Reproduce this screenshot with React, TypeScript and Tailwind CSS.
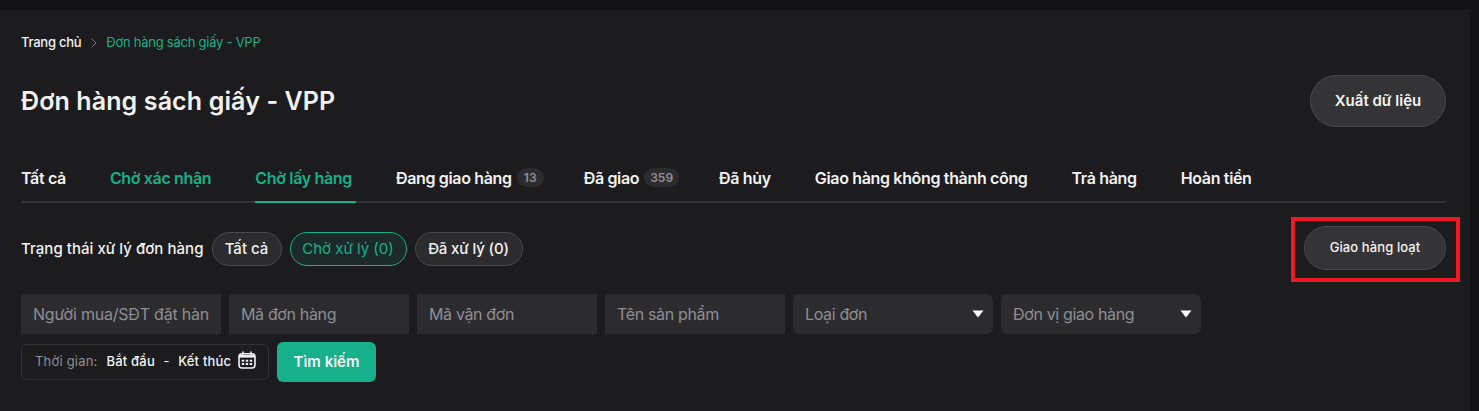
import React from 'react';
import { ChevronRight } from 'lucide-react';

const tabs = [
  { label: 'Tất cả' },
  { label: 'Chờ xác nhận', green: true },
  { label: 'Chờ lấy hàng', green: true, active: true },
  { label: 'Đang giao hàng', count: 13 },
  { label: 'Đã giao', count: 359 },
  { label: 'Đã hủy' },
  { label: 'Giao hàng không thành công' },
  { label: 'Trả hàng' },
  { label: 'Hoàn tiền' },
];

const CalendarIcon = () => (
  <svg width="18" height="18" viewBox="0 0 18 18" fill="none" stroke="currentColor" strokeWidth="1.6">
    <rect x="1" y="2.8" width="16" height="14.2" rx="3" />
    <path d="M5 0.6v3.6M13 0.6v3.6" />
    <path d="M1 4h16v2.6H1z" fill="currentColor" stroke="none" />
    <path d="M3.8 9.8h2.4M7.8 9.8h2.4M11.8 9.8h2.4M3.8 13h2.4M7.8 13h2.4M11.8 13h2.4" strokeWidth="2" />
  </svg>
);

const Caret = () => (
  <svg width="12" height="8" viewBox="0 0 12 8" fill="#fff">
    <path d="M0.5 0.5h11L6 7.5z" />
  </svg>
);

const TextField = ({ text, className }: { text: string; className: string }) => (
  <div className={`${className} h-10 bg-[#2c2c2e] px-3 flex items-center whitespace-nowrap text-base text-[#8e8e93]`}>
    {text}
  </div>
);

const SelectField = ({ text }: { text: string }) => (
  <div className="w-[200px] h-10 bg-[#2c2c2e] rounded-md pl-3 pr-[9px] flex items-center justify-between text-base tracking-[-0.35px] text-[#8e8e93]">
    <span>{text}</span>
    <Caret />
  </div>
);

export default function App() {
  return (
    <div className="h-[411px] bg-[#131315] pt-2.5 flex overflow-hidden text-[#f2f2f2] [font-family:Inter,sans-serif]">
      <div className="w-[1470px] h-[401px] bg-[#1c1c1e] pl-[21px] pr-[24px] pt-6">
        <div className="flex items-center h-[18px] text-[13px] tracking-[-0.25px] font-medium">
          <span>Trang chủ</span>
          <ChevronRight className="w-4 h-4 mx-[4.5px] text-[#8e8e93]" strokeWidth={1.25} />
          <span className="text-[#16b08a] font-normal">Đơn hàng sách giấy - VPP</span>
        </div>

        <div className="mt-[23px] flex items-center justify-between h-[52px]">
          <h1 className="pt-0.5 text-[25px] tracking-[0.12px] font-semibold">Đơn hàng sách giấy - VPP</h1>
          <button className="w-[136px] h-[52px] rounded-full bg-[#343436] border border-[#48484a] text-[15px] font-semibold">
            Xuất dữ liệu
          </button>
        </div>

        <div className="mt-6 h-[52px] pt-[3px] flex gap-10 border-b-2 border-[#333335]">
          {tabs.map((tab) => (
            <div
              key={tab.label}
              className={`h-[49px] -mb-0.5 flex items-center gap-[5px] text-base tracking-[-0.34px] font-semibold border-b-2 ${
                tab.count ? '' : 'pr-1'
              } ${tab.active ? 'border-[#16b08a]' : 'border-transparent'} ${tab.green ? 'text-[#16b08a]' : ''}`}
            >
              {tab.label}
              {tab.count && (
                <span className="min-w-[27px] px-1.5 h-[19px] flex items-center justify-center rounded-full bg-[#2c2c2e] text-xs tracking-normal font-semibold text-[#8e8e93]">
                  {tab.count}
                </span>
              )}
            </div>
          ))}
        </div>

        <div className="mt-[23px] h-11 flex items-center justify-between">
          <div className="flex items-center gap-2 pt-0.5 text-[15px] font-medium">
            <span className="tracking-[0.04px]">Trạng thái xử lý đơn hàng</span>
            <span className="w-[70px] h-[34px] flex items-center justify-center rounded-full bg-[#2c2c2e] border border-[#48484a]">Tất cả</span>
            <span className="w-[117px] h-[34px] flex items-center justify-center rounded-full bg-[#1c2b29] border border-[#16b08a] text-[#16b08a] font-normal">Chờ xử lý (0)</span>
            <span className="w-[108px] h-[34px] flex items-center justify-center rounded-full tracking-[-0.15px] bg-[#2c2c2e] border border-[#48484a]">Đã xử lý (0)</span>
          </div>
          <div className="relative">
            <button className="w-[142px] h-11 rounded-full bg-[#343436] border border-[#48484a] text-[13px] tracking-[0.1px] font-medium">
              Giao hàng loạt
            </button>
            <div className="absolute -left-[13px] -right-[14px] -top-[9px] -bottom-3 border-4 border-[#ed1c24]" />
          </div>
        </div>

        <div className="mt-6 flex gap-2">
          <TextField text="Người mua/SĐT đặt hàn" className="w-[200px] tracking-[-0.21px]" />
          <TextField text="Mã đơn hàng" className="w-[180px] tracking-[-0.35px]" />
          <TextField text="Mã vận đơn" className="w-[180px] tracking-[-0.35px]" />
          <TextField text="Tên sản phẩm" className="w-[180px] tracking-[-0.35px]" />
          <SelectField text="Loại đơn" />
          <SelectField text="Đơn vị giao hàng" />
        </div>

        <div className="mt-2 flex items-center gap-2">
          <div className="w-[248px] h-9 rounded-md border border-[#333335] pl-[13px] pr-[12px] flex items-center text-[13px] tracking-[0.2px]">
            <span className="text-[#8e8e93]">Thời gian:</span>
            <span className="ml-[9px] font-medium">Bắt đầu</span>
            <span className="mx-[8.5px]">-</span>
            <span className="font-medium">Kết thúc</span>
            <span className="ml-auto -mt-1"><CalendarIcon /></span>
          </div>
          <button className="w-[99px] h-10 rounded-md bg-[#16b08a] text-[15px] font-semibold">Tìm kiếm</button>
        </div>
      </div>
    </div>
  );
}
